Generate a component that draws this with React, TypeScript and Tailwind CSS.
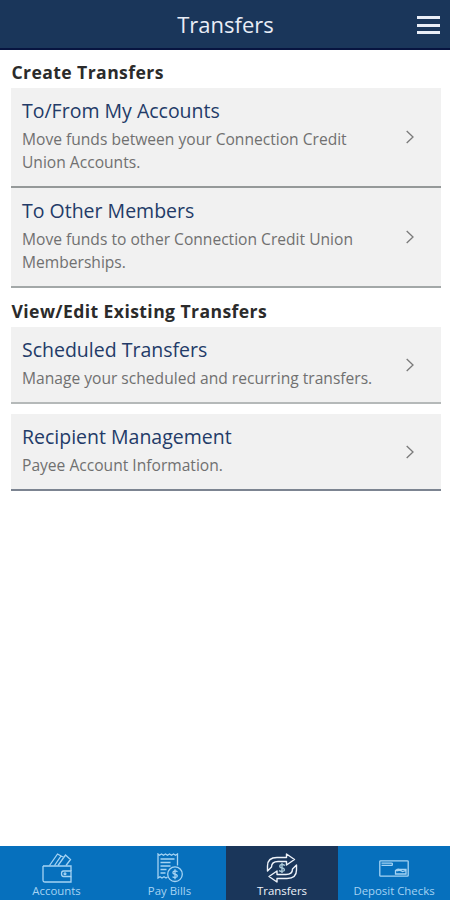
import type { ReactNode } from 'react'
import clsx from 'clsx'

function MenuButton() {
  return (
    <button aria-label="Menu" className="mt-0.5 flex h-[18px] w-[23px] flex-col justify-between">
      <span className="h-[3px] w-full bg-[#e9edf6]" />
      <span className="h-[3px] w-full bg-[#e9edf6]" />
      <span className="h-[3px] w-full bg-[#e9edf6]" />
    </button>
  )
}

function Chevron() {
  return (
    <svg width="8" height="14" viewBox="0 0 8 14" fill="none" stroke="#7a7a7a" strokeWidth="1.3">
      <path d="M0.7 1 L7 7 L0.7 13" />
    </svg>
  )
}

function TransferCard({
  title,
  lines,
  className,
}: {
  title: string
  lines: string[]
  className?: string
}) {
  return (
    <a className={clsx('mr-[9px] ml-[10.5px] flex items-center border-b-2 bg-[#f1f1f1] pr-[27px] pl-[11.5px]', className)}>
      <div className="flex-1 pb-[4px] whitespace-nowrap">
        <h3 className="text-[19.5px] leading-[27px] text-[#233b68]">{title}</h3>
        <p className="pt-[4px] text-[15.6px] leading-[23px] text-[#707070]">
          {lines.map((line) => (
            <span key={line} className="block">{line}</span>
          ))}
        </p>
      </div>
      <Chevron />
    </a>
  )
}

function WalletIcon() {
  return (
    <svg width="30" height="30" viewBox="0 0 30 30" fill="none" stroke="currentColor" strokeWidth="1.3">
      <path d="M1 13 H29 V18 M29 23.5 V29 H3 Q1 29 1 27 V13" />
      <path d="M29 18 H21.5 Q19.5 18 19.5 20.7 Q19.5 23.5 21.5 23.5 H29 Z" />
      <circle cx="23" cy="20.8" r="0.9" />
      <path d="M7.5 12.5 L15.5 1 L19 3 L12.5 12.5 M16 12.5 L23.5 2 L28.5 6.5 L24 12.5 M19 3 L22 4.5" />
    </svg>
  )
}

function BillIcon() {
  return (
    <svg width="26" height="30" viewBox="0 0 26 30" fill="none" stroke="currentColor" strokeWidth="1.3">
      <path d="M20.5 12.5 V1 L18.5 2.3 L16.5 1 L14.5 2.3 L12.5 1 L10.5 2.3 L8.5 1 L6.5 2.3 L4.5 1 L2.5 2.3 L1 1 V25 L3 23.7 L5 25 L7 23.7 L9 25 L10.5 24" />
      <path d="M3.5 6 H17.5 M3.5 9.5 H13.5 M3.5 13 H13.5 M3.5 16.5 H9.5 M3.5 20 H8.5" />
      <circle cx="18" cy="21.2" r="7.3" />
      <path d="M20.5 18.7 Q18 17.2 16.2 18.7 Q15.2 20.7 18 21.2 Q21 22 20 23.8 Q18 25.2 15.5 23.7 M18 16.2 V26.2" />
    </svg>
  )
}

function TransferIcon() {
  return (
    <svg width="32" height="30" viewBox="0 0 32 30" fill="none" stroke="currentColor" strokeWidth="1.4" strokeLinejoin="round">
      <path d="M1.5 18 V13 Q1.5 4.5 11 4.5 H20.5 V1 L28.5 6.5 L20.5 12 V8.5 H12 Q5.5 8.5 5.5 14 Z" />
      <path d="M30.5 12 V17 Q30.5 25.5 21 25.5 H11 V29 L3 23.5 L11 18 V21.5 H20 Q26.5 21.5 26.5 16 Z" />
      <path
        className="stroke-[#a9c9d8]"
        d="M19 12.5 Q16 10.7 14 12.3 Q13 14.4 16 15 Q19.4 15.7 18 17.8 Q16 19.2 13 17.6 M16 9.8 V20"
      />
    </svg>
  )
}

function CheckIcon() {
  return (
    <svg width="30" height="17" viewBox="0 0 30 17" fill="none" stroke="currentColor" strokeWidth="1.3">
      <rect x="0.8" y="0.8" width="28.4" height="15.4" rx="0.8" />
      <path d="M2.5 3.2 H12.5 Q14 3.2 13 5.4 H2.5 M16.5 14 V10.5 Q18.5 9 20.5 9.3 H27 V14 Z M17.5 11 Q20.5 9.3 23.5 11.5 L27 10.3" />
    </svg>
  )
}

function NavTab({ label, icon, active }: { label: string; icon: ReactNode; active?: boolean }) {
  return (
    <button
      className={clsx(
        'flex flex-col items-center whitespace-nowrap pt-[7px] text-[11.4px] leading-[15px]',
        active ? 'bg-[#1a365a] text-[#eef3fa]' : 'bg-[#0670bd] text-[#a5d3f3]',
      )}
    >
      <span className="flex h-[30px] items-center">{icon}</span>
      <span>{label}</span>
    </button>
  )
}

export default function App() {
  return (
    <div className="flex h-[900px] w-[450px] flex-col overflow-hidden bg-white font-['Open_Sans',sans-serif]">
      <header className="grid h-[50px] grid-cols-[1fr_auto_1fr] items-center border-b-2 border-[#071440] bg-[#1a365a] pr-[10px]">
        <h1 className="col-start-2 pl-[11px] text-[22px] text-[#e9edf6]">Transfers</h1>
        <div className="flex justify-end">
          <MenuButton />
        </div>
      </header>

      <main className="flex flex-1 flex-col">
        <h2 className="h-[38px] pt-[10px] pl-[11.5px] text-[17.6px] leading-6 font-bold tracking-[0.4px] text-[#2b2b2b]">
          Create Transfers
        </h2>
        <TransferCard
          title="To/From My Accounts"
          lines={['Move funds between your Connection Credit', 'Union Accounts.']}
          className="h-[100px] border-[#959999]"
        />
        <TransferCard
          title="To Other Members"
          lines={['Move funds to other Connection Credit Union', 'Memberships.']}
          className="h-[100px] border-[#a3a8a8]"
        />
        <h2 className="h-[39px] pt-[11px] pl-[11.5px] text-[17.6px] leading-6 font-bold tracking-[0.4px] text-[#2b2b2b]">
          View/Edit Existing Transfers
        </h2>
        <TransferCard
          title="Scheduled Transfers"
          lines={['Manage your scheduled and recurring transfers.']}
          className="h-[77px] border-[#b5b9b9]"
        />
        <TransferCard
          title="Recipient Management"
          lines={['Payee Account Information.']}
          className="mt-[10px] h-[77px] border-[#7c8491]"
        />
      </main>

      <nav className="grid h-[54px] grid-cols-[113px_113px_112px_112px]">
        <NavTab label="Accounts" icon={<WalletIcon />} />
        <NavTab label="Pay Bills" icon={<BillIcon />} />
        <NavTab label="Transfers" icon={<TransferIcon />} active />
        <NavTab label="Deposit Checks" icon={<CheckIcon />} />
      </nav>
    </div>
  )
}
